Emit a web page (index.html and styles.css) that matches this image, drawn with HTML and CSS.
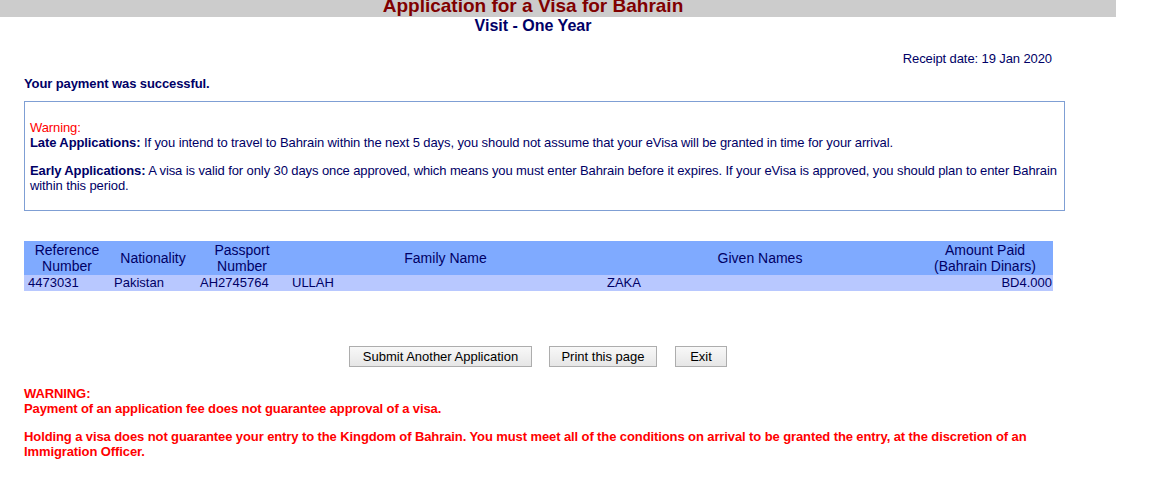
FILE: index.html
```html
<!DOCTYPE html>
<html>
<head>
<meta charset="utf-8">
<title>Application for a Visa for Bahrain</title>
<link rel="stylesheet" href="styles.css">
</head>
<body>
<div class="titlebar"><h1 class="title">Application for a Visa for Bahrain</h1></div>
<div class="page">
  <h2 class="subtitle">Visit - One Year</h2>
  <div class="receipt">Receipt date: 19 Jan 2020</div>
  <div class="success">Your payment was successful.</div>
  <div class="notice">
    <div class="warn">Warning:</div>
    <p class="para"><b>Late Applications:</b> If you intend to travel to Bahrain within the next 5 days, you should not assume that your eVisa will be granted in time for your arrival.</p>
    <p class="para second"><b>Early Applications:</b> A visa is valid for only 30 days once approved, which means you must enter Bahrain before it expires. If your eVisa is approved, you should plan to enter Bahrain within this period.</p>
  </div>
  <table class="results">
    <colgroup>
      <col class="c-ref"><col class="c-nat"><col class="c-pass"><col class="c-fam"><col class="c-given"><col class="c-amt">
    </colgroup>
    <thead>
      <tr>
        <th>Reference<br>Number</th>
        <th>Nationality</th>
        <th>Passport<br>Number</th>
        <th>Family Name</th>
        <th>Given Names</th>
        <th>Amount Paid<br>(Bahrain Dinars)</th>
      </tr>
    </thead>
    <tbody>
      <tr>
        <td>4473031</td>
        <td>Pakistan</td>
        <td>AH2745764</td>
        <td>ULLAH</td>
        <td>ZAKA</td>
        <td class="amount">BD4.000</td>
      </tr>
    </tbody>
  </table>
  <div class="actions">
    <button class="btn submit" type="button">Submit Another Application</button>
    <button class="btn print" type="button">Print this page</button>
    <button class="btn exit" type="button">Exit</button>
  </div>
  <div class="footwarn">
    <p class="fw">WARNING:<br>Payment of an application fee does not guarantee approval of a visa.</p>
    <p class="fw second">Holding a visa does not guarantee your entry to the Kingdom of Bahrain. You must meet all of the conditions on arrival to be granted the entry, at the discretion of an Immigration Officer.</p>
  </div>
</div>
</body>
</html>
```
FILE: styles.css
```css
html, body {
  margin: 0;
  padding: 0;
  background: #ffffff;
}
body {
  font-family: "Liberation Sans", Arial, sans-serif;
  font-size: 13px;
  color: #000066;
}
.titlebar {
  width: 1116px;
  height: 17px;
  background: #cccccc;
  overflow: hidden;
}
.title {
  width: 1066px;
  margin: 0;
  font-size: 19px;
  line-height: 11px;
  font-weight: bold;
  color: #800000;
  text-align: center;
}
.page {
  width: 1066px;
}
.subtitle {
  margin: 0;
  font-size: 16px;
  line-height: 18px;
  font-weight: bold;
  color: #000066;
  text-align: center;
}
.receipt {
  margin-top: 16px;
  line-height: 15px;
  text-align: right;
  padding-right: 14px;
  letter-spacing: -0.1px;
}
.success {
  margin-top: 10px;
  margin-left: 24px;
  line-height: 15px;
  font-weight: bold;
  letter-spacing: -0.1px;
}
.notice {
  margin: 10px 0 0 24px;
  width: 1034px;
  border: 1px solid #7f9fd4;
  padding: 18px 0 17px 5px;
  line-height: 15px;
  letter-spacing: -0.1px;
}
.warn {
  color: #ff0000;
}
.para {
  margin: 0;
  padding-right: 4px;
}
.para.second {
  margin-top: 13px;
}
.results {
  margin: 30px 0 0 24px;
  width: 1029px;
  border-collapse: collapse;
  table-layout: fixed;
}
.c-ref { width: 86px; }
.c-nat { width: 86px; }
.c-pass { width: 92px; }
.c-fam { width: 315px; }
.c-given { width: 314px; }
.c-amt { width: 136px; }
.results th {
  background: #7faaff;
  font-weight: normal;
  font-size: 14px;
  line-height: 16px;
  padding: 1px 2px;
  text-align: center;
  vertical-align: middle;
}
.results td {
  background: #b8c8ff;
  font-size: 13px;
  line-height: 16px;
  padding: 0 4px;
  white-space: nowrap;
}
.results td.amount {
  text-align: right;
  padding-right: 1px;
}
.actions {
  margin-top: 55px;
  padding-left: 10px;
  display: flex;
  justify-content: center;
  gap: 17px;
}
.btn {
  font-family: "Liberation Sans", Arial, sans-serif;
  font-size: 13px;
  line-height: 17px;
  color: #000000;
  height: 21px;
  padding: 0;
  border: 1px solid #adadad;
  border-radius: 0;
  background: linear-gradient(#f8f8f8, #e6e6e6);
}
.btn.submit {
  width: 183px;
}
.btn.print {
  width: 108px;
}
.btn.exit {
  width: 52px;
  margin-left: 1px;
}
.footwarn {
  margin: 19px 0 0 24px;
  color: #ff0000;
  font-weight: bold;
  line-height: 15px;
  letter-spacing: -0.1px;
}
.fw {
  margin: 0;
}
.fw.second {
  margin-top: 13px;
}
```
